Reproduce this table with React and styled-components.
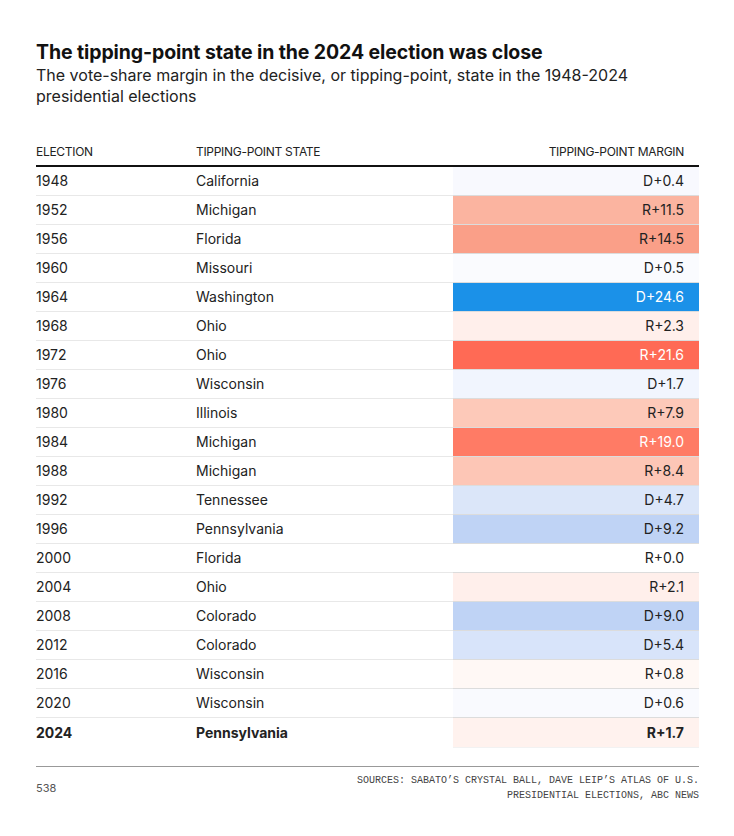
import React from "react";
import styled, { createGlobalStyle } from "styled-components";

const GlobalStyle = createGlobalStyle`
  body {
    margin: 0;
    background: #ffffff;
    font-family: "Inter", "Liberation Sans", sans-serif;
    color: #222;
  }
`;

const rows = [
  ["1948", "California", "D+0.4", "#f8f9fe", false],
  ["1952", "Michigan", "R+11.5", "#fbb4a0", false],
  ["1956", "Florida", "R+14.5", "#fa9f88", false],
  ["1960", "Missouri", "D+0.5", "#fafbfe", false],
  ["1964", "Washington", "D+24.6", "#1b91e8", true],
  ["1968", "Ohio", "R+2.3", "#ffefeb", false],
  ["1972", "Ohio", "R+21.6", "#ff6a55", true],
  ["1976", "Wisconsin", "D+1.7", "#f1f5fe", false],
  ["1980", "Illinois", "R+7.9", "#fdc9b9", false],
  ["1984", "Michigan", "R+19.0", "#ff7b65", true],
  ["1988", "Michigan", "R+8.4", "#fdc6b6", false],
  ["1992", "Tennessee", "D+4.7", "#dbe6f9", false],
  ["1996", "Pennsylvania", "D+9.2", "#bfd3f5", false],
  ["2000", "Florida", "R+0.0", "#ffffff", false],
  ["2004", "Ohio", "R+2.1", "#ffefeb", false],
  ["2008", "Colorado", "D+9.0", "#bfd3f5", false],
  ["2012", "Colorado", "D+5.4", "#d8e4fa", false],
  ["2016", "Wisconsin", "R+0.8", "#fff8f5", false],
  ["2020", "Wisconsin", "D+0.6", "#f9fafe", false],
  ["2024", "Pennsylvania", "R+1.7", "#fff2ee", false],
];

const Wrap = styled.div`
  width: 663px;
  padding: 40px 35px 0 36px;
`;

const Title = styled.h1`
  margin: 0;
  font-size: 19.5px;
  line-height: 24px;
  font-weight: 700;
  color: #111;
  letter-spacing: -0.1px;
`;

const Subtitle = styled.p`
  margin: 1px 0 0;
  font-size: 16px;
  line-height: 21px;
  color: #222;
  width: 600px;
`;

const Table = styled.div`
  margin-top: 31px;
`;

const HeadRow = styled.div`
  display: grid;
  grid-template-columns: 160px 257px 246px;
  height: 29px;
  box-sizing: border-box;
  align-items: end;
  padding-bottom: 6px;
  border-bottom: 2px solid #111;
  font-size: 12px;
  line-height: 14px;
  text-transform: uppercase;
  color: #222;
  letter-spacing: -0.3px;
`;

const HeadCell = styled.div`
  text-align: ${(p) => (p.right ? "right" : "left")};
  padding-right: ${(p) => (p.right ? "15px" : "0")};
`;

const Row = styled.div`
  display: grid;
  grid-template-columns: 160px 257px 246px;
  height: 29px;
  box-sizing: border-box;
  font-size: 14px;
  font-weight: ${(p) => (p.bold ? 700 : 400)};
  color: #222;
  border-bottom: ${(p) => (p.last ? "none" : "1px solid #e8e8e8")};
`;

const Cell = styled.div`
  display: flex;
  align-items: center;
  padding-bottom: 1px;
`;

const Margin = styled.div`
  display: flex;
  align-items: center;
  justify-content: flex-end;
  padding-right: 15px;
  padding-bottom: 1px;
  background: ${(p) => p.bg};
  color: ${(p) => (p.light ? "#fff" : "#222")};
  box-shadow: 0 1px 0 rgba(0, 0, 0, 0.05);
`;

const Footer = styled.div`
  margin-top: 19px;
  border-top: 1px solid #999;
  display: flex;
  justify-content: space-between;
  padding-top: 6px;
`;

const Credit = styled.div`
  font-size: 11px;
  color: #555;
  margin-top: 8px;
`;

const Sources = styled.div`
  font-family: "Liberation Mono", "DejaVu Sans Mono", monospace;
  font-size: 10px;
  line-height: 15px;
  color: #444;
  text-align: right;
  text-transform: uppercase;
`;

export default function App() {
  return (
    <>
      <GlobalStyle />
      <Wrap>
        <Title>The tipping-point state in the 2024 election was close</Title>
        <Subtitle>
          The vote-share margin in the decisive, or tipping-point, state in the
          1948-2024 presidential elections
        </Subtitle>
        <Table>
          <HeadRow>
            <HeadCell>Election</HeadCell>
            <HeadCell>Tipping-point state</HeadCell>
            <HeadCell right>Tipping-point margin</HeadCell>
          </HeadRow>
          {rows.map(([year, state, margin, bg, light], i) => (
            <Row key={year} bold={year === "2024"} last={i === rows.length - 1}>
              <Cell>{year}</Cell>
              <Cell>{state}</Cell>
              <Margin bg={bg} light={light}>
                {margin}
              </Margin>
            </Row>
          ))}
        </Table>
        <Footer>
          <Credit>538</Credit>
          <Sources>
            Sources: Sabato’s Crystal Ball, Dave Leip’s Atlas of U.S.
            <br />
            Presidential Elections, ABC News
          </Sources>
        </Footer>
      </Wrap>
    </>
  );
}
